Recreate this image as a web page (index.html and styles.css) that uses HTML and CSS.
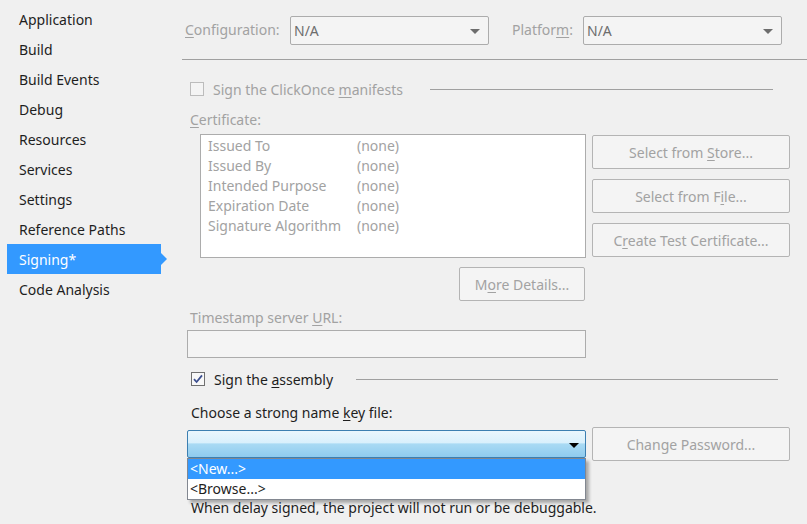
FILE: index.html
```html
<!DOCTYPE html>
<html>
<head>
<meta charset="utf-8">
<link rel="stylesheet" href="styles.css">
</head>
<body>
<div class="page">
  <nav class="nav">
    <div class="nav-item">Application</div>
    <div class="nav-item">Build</div>
    <div class="nav-item">Build Events</div>
    <div class="nav-item">Debug</div>
    <div class="nav-item">Resources</div>
    <div class="nav-item">Services</div>
    <div class="nav-item">Settings</div>
    <div class="nav-item">Reference Paths</div>
    <div class="nav-item selected">Signing*</div>
    <div class="nav-item">Code Analysis</div>
  </nav>
  <main class="main">
    <div class="header">
      <span class="lbl dis cfg-lbl"><u>C</u>onfiguration:</span>
      <div class="combo dis-combo"><span>N/A</span><span class="arrow grey"></span></div>
      <span class="lbl dis plat-lbl">Platfor<u>m</u>:</span>
      <div class="combo dis-combo"><span>N/A</span><span class="arrow grey"></span></div>
    </div>

    <div class="check-row clickonce">
      <span class="checkbox"></span>
      <span class="dis">Sign the ClickOnce <u>m</u>anifests</span>
      <span class="rule rule-clickonce"></span>
    </div>

    <div class="lbl-row dis cert-lbl"><u>C</u>ertificate:</div>

    <div class="cert-area">
      <div class="cert-col">
        <div class="listbox">
          <div class="cert-row"><span class="k">Issued To</span><span>(none)</span></div>
          <div class="cert-row"><span class="k">Issued By</span><span>(none)</span></div>
          <div class="cert-row"><span class="k">Intended Purpose</span><span>(none)</span></div>
          <div class="cert-row"><span class="k">Expiration Date</span><span>(none)</span></div>
          <div class="cert-row"><span class="k">Signature Algorithm</span><span>(none)</span></div>
        </div>
        <div class="more-wrap"><div class="btn more"><span>M<u>o</u>re Details...</span></div></div>
      </div>
      <div class="btn-col">
        <div class="btn"><span>Select from <u>S</u>tore...</span></div>
        <div class="btn"><span>Select from F<u>i</u>le...</span></div>
        <div class="btn"><span>C<u>r</u>eate Test Certificate...</span></div>
      </div>
    </div>

    <div class="lbl-row dis ts-lbl">Timestamp server <u>U</u>RL:</div>
    <div class="textbox"></div>

    <div class="check-row assembly">
      <span class="checkbox checked">
        <svg width="12" height="12" viewBox="0 0 12 12"><path d="M2 6.2 L4.6 9 L10 2.4" fill="none" stroke="#3c4f8f" stroke-width="1.8"/></svg>
      </span>
      <span class="dark">Sign the <u>a</u>ssembly</span>
      <span class="rule rule-assembly"></span>
    </div>

    <div class="lbl-row dark key-lbl">Choose a strong name <u>k</u>ey file:</div>

    <div class="key-row">
      <div class="key-combo-wrap">
        <div class="combo blue-combo"><span></span><span class="arrow black"></span></div>
        <div class="dropdown">
          <div class="dd-item hl">&lt;New...&gt;</div>
          <div class="dd-item">&lt;Browse...&gt;</div>
        </div>
      </div>
      <div class="btn pw"><span>Change Password...</span></div>
    </div>

    <div class="lbl-row dark delay">When delay signed, the project will not run or be debuggable.</div>
  </main>
</div>
</body>
</html>
```
FILE: styles.css
```css
html, body {
  margin: 0;
  padding: 0;
  background: #f0f0f0;
  overflow: hidden;
}
body {
  width: 807px;
  height: 524px;
  font-family: "Noto Sans", "Open Sans", sans-serif;
  font-size: 14px;
  color: #1e1e1e;
}
u { text-decoration-thickness: 1px; text-underline-offset: 2px; }
.page {
  display: flex;
  height: 524px;
}
.nav {
  width: 175px;
  flex: none;
  padding-top: 4px;
  padding-left: 7px;
  box-sizing: border-box;
}
.nav-item {
  position: relative;
  width: 154px;
  height: 30px;
  line-height: 30px;
  padding: 1px 0 0 12px;
  box-sizing: border-box;
  white-space: nowrap;
}
.nav-item.selected {
  background: #3399ff;
  color: #ffffff;
}
.nav-item.selected::after {
  content: "";
  position: absolute;
  right: -6px;
  top: 9px;
  border-left: 6px solid #3399ff;
  border-top: 6px solid transparent;
  border-bottom: 6px solid transparent;
}
.main {
  flex: 1;
  position: relative;
  padding-left: 7px;
}
.dis { color: #a2a2a2; }
.dark { color: #1e1e1e; }

.header {
  border-bottom: 1px solid #a0a0a0;
  display: flex;
  align-items: flex-start;
  padding-top: 16px;
  padding-left: 3px;
  box-sizing: border-box;
  height: 60px;
}
.lbl { line-height: 28px; white-space: nowrap; }
.cfg-lbl { width: 105px; }
.plat-lbl { width: 71px; margin-left: 23px; }
.combo {
  width: 199px;
  height: 29px;
  box-sizing: border-box;
  border: 1px solid #acacac;
  border-radius: 2px;
  display: flex;
  align-items: center;
  justify-content: space-between;
  padding: 0 8px 0 3px;
}
.dis-combo {
  background: #f4f4f4;
  color: #6d6d6d;
}
.arrow {
  width: 0; height: 0;
  border-left: 5px solid transparent;
  border-right: 5px solid transparent;
  border-top: 5px solid #6d6d6d;
  margin-top: 2px;
}
.arrow.black { border-top-color: #000; }

.check-row {
  display: flex;
  align-items: center;
  height: 18px;
  padding-left: 8px;
  white-space: nowrap;
}
.clickonce { margin-top: 20px; }
.checkbox {
  width: 14px; height: 14px;
  box-sizing: border-box;
  border: 1px solid #bcbcbc;
  background: #f4f4f4;
  margin-right: 9px;
  flex: none;
  display: flex;
  align-items: center;
  justify-content: center;
}
.checkbox.checked {
  border-color: #707070;
  background: #f8f8f8;
}
.rule {
  height: 1px;
  background: #a0a0a0;
  flex: none;
}
.rule-clickonce { margin-left: 27px; width: 343px; }
.rule-assembly { margin-left: 23px; width: 422px; }

.lbl-row {
  height: 18px;
  line-height: 18px;
  padding-left: 8px;
  white-space: nowrap;
}
.cert-lbl { margin-top: 13px; }

.cert-area {
  display: flex;
  margin-top: 5px;
  margin-left: 18px;
}
.cert-col { width: 386px; }
.listbox {
  height: 124px;
  box-sizing: border-box;
  border: 1px solid #acacac;
  background: #ffffff;
  padding: 1px 0 0 7px;
  color: #a2a2a2;
}
.cert-row {
  display: flex;
  height: 20px;
  line-height: 20px;
  white-space: nowrap;
}
.cert-row .k { width: 149px; }
.more-wrap {
  display: flex;
  justify-content: flex-end;
  margin-top: 9px;
  padding-right: 1px;
}
.btn {
  height: 34px;
  box-sizing: border-box;
  border: 1px solid #b4b4b4;
  border-radius: 2px;
  background: #f4f4f4;
  color: #a2a2a2;
  display: flex;
  align-items: center;
  justify-content: center;
  white-space: nowrap;
}
.more { width: 126px; }
.btn-col {
  width: 198px;
  margin-left: 6px;
  margin-top: 1px;
  display: flex;
  flex-direction: column;
  gap: 10px;
}

.ts-lbl { margin-top: 8px; }
.textbox {
  margin-top: 3px;
  margin-left: 5px;
  width: 399px;
  height: 28px;
  box-sizing: border-box;
  border: 1px solid #acacac;
  background: #f4f4f4;
}
.assembly { margin-top: 12px; padding-left: 9px; }
.key-lbl { margin-top: 16px; padding-left: 9px; }

.key-row {
  display: flex;
  align-items: center;
  margin-top: 5px;
  margin-left: 5px;
}
.key-combo-wrap {
  position: relative;
  width: 399px;
}
.blue-combo {
  width: 399px;
  height: 28px;
  border: 1px solid #3c7fb1;
  border-radius: 2px;
  background: linear-gradient(to bottom, #eaf6fd 0%, #d9f0fc 45%, #a9daf4 50%, #8fcbee 100%);
  padding-right: 6px;
}
.dropdown {
  position: absolute;
  left: 0;
  top: 28px;
  width: 399px;
  box-sizing: border-box;
  border: 1px solid #828790;
  background: #ffffff;
  box-shadow: 3px 3px 3px rgba(0,0,0,0.3);
  z-index: 2;
}
.dd-item {
  height: 20px;
  line-height: 20px;
  padding-left: 2px;
  color: #1e1e1e;
  white-space: nowrap;
}
.dd-item.hl {
  background: #3399ff;
  color: #ffffff;
}
.pw {
  width: 198px;
  margin-left: 6px;
}
.delay {
  margin-top: 38px;
  padding-left: 9px;
}
```
